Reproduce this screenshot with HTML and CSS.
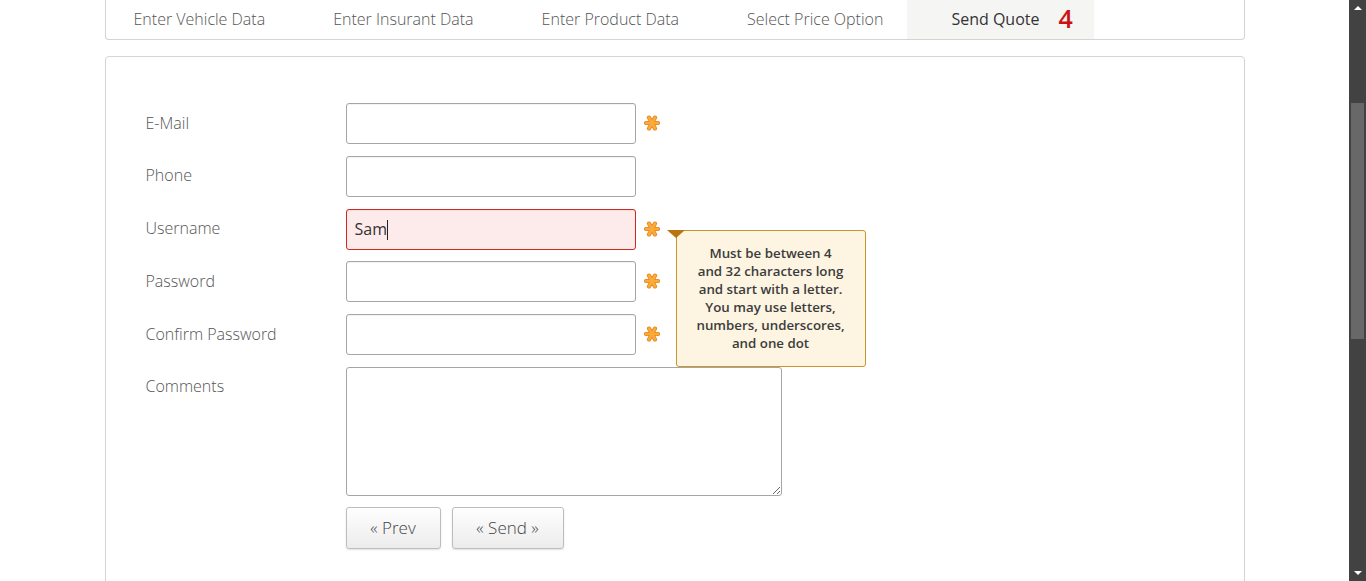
FILE: index.html
```html
<!DOCTYPE html>
<html lang="en">
<head>
<meta charset="utf-8">
<title>Send Quote</title>
<link rel="stylesheet" href="styles.css">
</head>
<body>
<div class="viewport">
  <div class="page">
    <div class="container">
      <nav class="steps">
        <a class="step">Enter Vehicle Data</a>
        <a class="step">Enter Insurant Data</a>
        <a class="step">Enter Product Data</a>
        <a class="step last">Select Price Option</a>
        <a class="step active">Send Quote <span class="count">4</span></a>
      </nav>
      <div class="card">
        <form class="form">
          <div class="row">
            <label class="label">E-Mail</label>
            <input class="input" type="text">
            <span class="req"><svg viewBox="0 0 16 16" width="16" height="16"><g stroke="#e8861a" stroke-width="4.2" stroke-linecap="round"><line x1="2" y1="8" x2="14" y2="8"/><line x1="5" y1="2.6" x2="11" y2="13.4"/><line x1="11" y1="2.6" x2="5" y2="13.4"/></g><g stroke="#f9ab3c" stroke-width="2.6" stroke-linecap="round"><line x1="2" y1="8" x2="14" y2="8"/><line x1="5" y1="2.6" x2="11" y2="13.4"/><line x1="11" y1="2.6" x2="5" y2="13.4"/></g></svg></span>
          </div>
          <div class="row">
            <label class="label">Phone</label>
            <input class="input" type="text">
          </div>
          <div class="row">
            <label class="label">Username</label>
            <div class="field">
              <input class="input invalid" type="text" value="Sam">
              <span class="caret"></span>
            </div>
            <span class="req"><svg viewBox="0 0 16 16" width="16" height="16"><g stroke="#e8861a" stroke-width="4.2" stroke-linecap="round"><line x1="2" y1="8" x2="14" y2="8"/><line x1="5" y1="2.6" x2="11" y2="13.4"/><line x1="11" y1="2.6" x2="5" y2="13.4"/></g><g stroke="#f9ab3c" stroke-width="2.6" stroke-linecap="round"><line x1="2" y1="8" x2="14" y2="8"/><line x1="5" y1="2.6" x2="11" y2="13.4"/><line x1="11" y1="2.6" x2="5" y2="13.4"/></g></svg></span>
            <div class="tooltip">Must be between 4<br>and 32 characters long<br>and start with a letter.<br>You may use letters,<br>numbers, underscores,<br>and one dot</div>
          </div>
          <div class="row">
            <label class="label">Password</label>
            <input class="input" type="password">
            <span class="req"><svg viewBox="0 0 16 16" width="16" height="16"><g stroke="#e8861a" stroke-width="4.2" stroke-linecap="round"><line x1="2" y1="8" x2="14" y2="8"/><line x1="5" y1="2.6" x2="11" y2="13.4"/><line x1="11" y1="2.6" x2="5" y2="13.4"/></g><g stroke="#f9ab3c" stroke-width="2.6" stroke-linecap="round"><line x1="2" y1="8" x2="14" y2="8"/><line x1="5" y1="2.6" x2="11" y2="13.4"/><line x1="11" y1="2.6" x2="5" y2="13.4"/></g></svg></span>
          </div>
          <div class="row">
            <label class="label">Confirm Password</label>
            <input class="input" type="password">
            <span class="req"><svg viewBox="0 0 16 16" width="16" height="16"><g stroke="#e8861a" stroke-width="4.2" stroke-linecap="round"><line x1="2" y1="8" x2="14" y2="8"/><line x1="5" y1="2.6" x2="11" y2="13.4"/><line x1="11" y1="2.6" x2="5" y2="13.4"/></g><g stroke="#f9ab3c" stroke-width="2.6" stroke-linecap="round"><line x1="2" y1="8" x2="14" y2="8"/><line x1="5" y1="2.6" x2="11" y2="13.4"/><line x1="11" y1="2.6" x2="5" y2="13.4"/></g></svg></span>
          </div>
          <div class="row top">
            <label class="label">Comments</label>
            <textarea class="textarea"></textarea>
          </div>
          <div class="actions">
            <button type="button" class="btn prev">« Prev</button>
            <button type="button" class="btn send">« Send »</button>
          </div>
        </form>
      </div>
    </div>
  </div>
  <div class="scrollbar">
    <span class="arrow up"></span>
    <div class="track"><div class="thumb"></div></div>
    <span class="arrow down"></span>
  </div>
</div>
</body>
</html>
```

FILE: styles.css
```css
html, body {
  margin: 0;
  padding: 0;
  height: 581px;
  overflow: hidden;
  background: #fff;
  font-family: "Open Sans", "Liberation Sans", sans-serif;
}

.viewport {
  display: flex;
  height: 581px;
}

.page {
  flex: 1;
  min-width: 0;
}

.container {
  width: 1140px;
  margin: 0 auto;
}

.steps {
  display: flex;
  align-items: stretch;
  height: 39px;
  border: 1px solid #d4d4d4;
  border-top: none;
  border-radius: 0 0 4px 4px;
  padding-left: 28px;
}

.step {
  display: flex;
  align-items: center;
  padding-bottom: 2px;
  box-sizing: border-box;
  font-size: 16px;
  font-weight: 300;
  color: #555;
  margin-right: 68px;
  white-space: nowrap;
}

.step.last {
  margin-right: 24px;
}

.step.active {
  background: #f5f5f4;
  margin-right: 0;
  padding: 0 21px 2px 44px;
  font-weight: 500;
  color: #333;
  height: 39px;
}

.count {
  color: #cc1111;
  font-size: 25px;
  font-weight: 600;
  margin-left: 19px;
  line-height: 1;
}

.card {
  margin-top: 16px;
  border: 1px solid #d4d4d4;
  border-radius: 4px;
  padding: 46px 40px 60px;
  height: 600px;
}

.form {
  display: flex;
  flex-direction: column;
}

.row {
  display: flex;
  align-items: center;
  position: relative;
  margin-bottom: 11.8px;
}

.row.top {
  align-items: flex-start;
}

.row.top .label {
  padding-top: 8px;
}

.label {
  width: 200px;
  font-size: 16px;
  font-weight: 300;
  color: #555;
  padding-bottom: 2px;
}

.field {
  position: relative;
}

.input {
  box-sizing: border-box;
  width: 290px;
  height: 41px;
  border: 1px solid #a6a6a6;
  border-radius: 3px;
  padding: 0 8px;
  font-family: "Open Sans", "Liberation Sans", sans-serif;
  font-size: 16px;
  color: #333;
  background: #fff;
  box-shadow: inset 0 1px 1px rgba(0, 0, 0, 0.05);
  outline: none;
}

.input.invalid {
  border-color: #d02a20;
  background: #fdeaea;
}

.caret {
  position: absolute;
  left: 41px;
  top: 11px;
  width: 1px;
  height: 20px;
  background: #222;
}

.req {
  display: flex;
  margin-left: 8px;
  width: 16px;
  height: 16px;
  margin-bottom: 1px;
}

.tooltip {
  position: absolute;
  left: 530px;
  top: 21px;
  box-sizing: border-box;
  width: 190px;
  padding: 13px 4px 14px;
  background: #fdf5e2;
  border: 1px solid #c9962e;
  border-radius: 3px;
  font-size: 13.3px;
  line-height: 18px;
  font-weight: 550;
  color: #3c3c3c;
  text-align: center;
  z-index: 2;
}

.tooltip::before {
  content: "";
  position: absolute;
  left: -10px;
  top: -1px;
  border-left: 9px solid transparent;
  border-right: 9px solid transparent;
  border-top: 8px solid #b8740f;
}

.textarea {
  box-sizing: border-box;
  width: 436px;
  height: 129px;
  border: 1px solid #a6a6a6;
  border-radius: 3px;
  font-family: "Open Sans", "Liberation Sans", sans-serif;
  font-size: 15px;
  resize: both;
  outline: none;
}

.actions {
  display: flex;
  gap: 11px;
  margin-left: 200px;
  margin-top: -0.8px;
}

.btn {
  height: 42px;
  border: 1px solid #bdbdbd;
  border-radius: 3px;
  background: linear-gradient(#fefefe, #ececec);
  box-shadow: 0 1px 2px rgba(0, 0, 0, 0.12);
  font-family: "Open Sans", "Liberation Sans", sans-serif;
  font-size: 17px;
  font-weight: 300;
  color: #444;
  padding: 0;
  cursor: pointer;
}

.btn.prev {
  width: 95px;
}

.btn.send {
  width: 112px;
}

.scrollbar {
  width: 17px;
  flex: none;
  background: #424242;
  display: flex;
  flex-direction: column;
  align-items: center;
}

.arrow {
  display: block;
  width: 0;
  height: 0;
  border-left: 4px solid transparent;
  border-right: 4px solid transparent;
  margin: 6px 0;
}

.arrow.up {
  border-bottom: 4px solid #fff;
}

.arrow.down {
  border-top: 4px solid #fff;
}

.track {
  flex: 1;
  width: 100%;
  padding-top: 87px;
}

.thumb {
  width: 13px;
  margin-left: 2px;
  height: 236px;
  background: #686868;
}
```
